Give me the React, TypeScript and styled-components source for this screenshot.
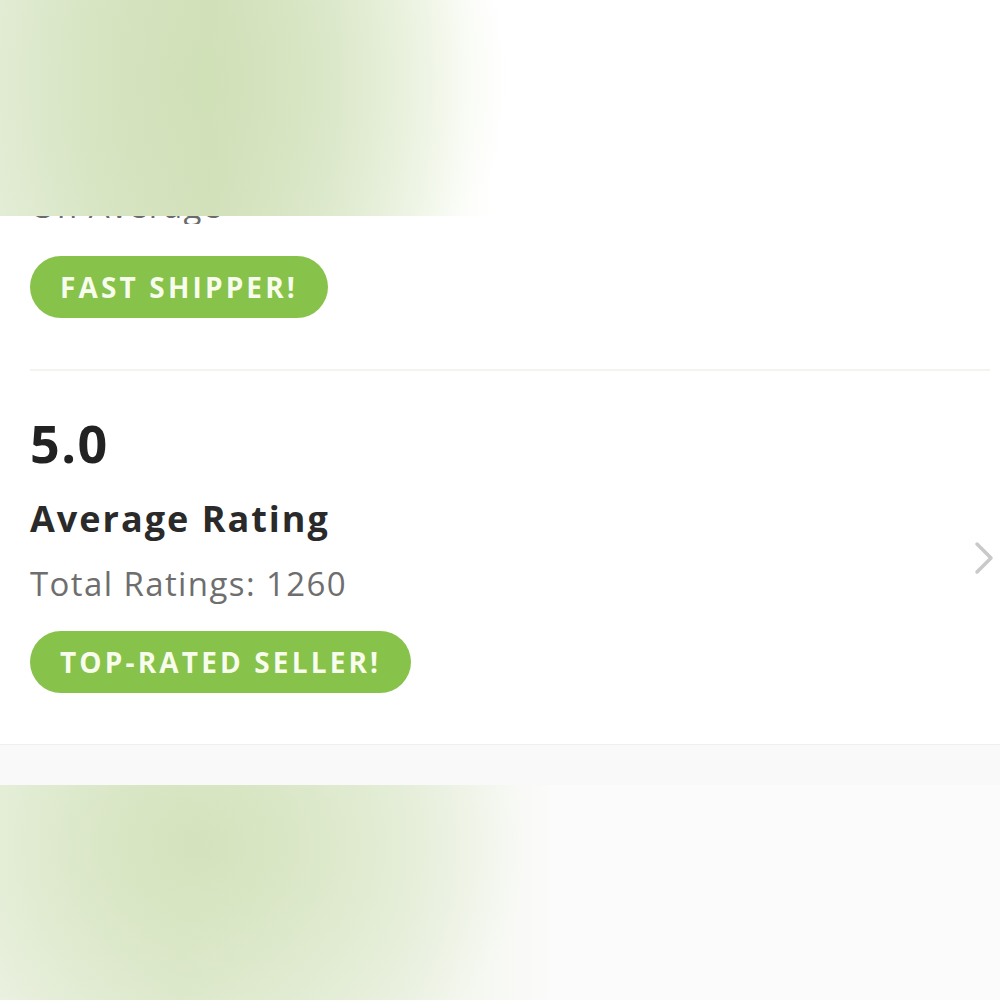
import React from "react";
import styled, { createGlobalStyle } from "styled-components";

const GlobalStyle = createGlobalStyle`
  html, body {
    margin: 0;
    padding: 0;
    background: #ffffff;
  }
  body {
    font-family: "Open Sans", Lato, "Liberation Sans", sans-serif;
    -webkit-font-smoothing: antialiased;
  }
`;

const Page = styled.div`
  width: 1000px;
  height: 1000px;
  overflow: hidden;
  display: flex;
  flex-direction: column;
  background: #ffffff;
`;

const Stats = styled.div`
  display: flex;
  flex-direction: column;
  border-bottom: 1px solid #efefef;
`;

const ClipTop = styled.div`
  position: relative;
  height: 224px;
  overflow: hidden;
`;

const BlurTop = styled.div`
  position: absolute;
  left: 0;
  top: 0;
  width: 1000px;
  height: 216px;
  background:
    radial-gradient(ellipse 300px 260px at 210px 80px, rgba(205, 222, 178, 0.55), rgba(205, 222, 178, 0) 100%),
    linear-gradient(to right, #e5eed9 0px, #d9e6c6 120px, #d4e2bd 210px, #e2ecd4 330px, #f3f8ec 420px, #fdfefb 470px, #ffffff 500px);
`;

const Faded = styled.p`
  position: absolute;
  left: 30px;
  bottom: 0;
  margin: 0;
  font-size: 33px;
  line-height: 36px;
  letter-spacing: 1.4px;
  color: #6b6b6b;
`;

const Body = styled.div`
  display: flex;
  flex-direction: column;
  padding: 0 4px 0 30px;
`;

const Pill = styled.span`
  align-self: flex-start;
  display: inline-flex;
  align-items: center;
  height: 62px;
  padding: 0 30px;
  border-radius: 31px;
  background: #87c24b;
  color: #f7fcec;
  font-size: 28px;
  font-weight: 700;
  letter-spacing: 3.15px;
`;

const Divider = styled.hr`
  margin: 0 6px 0 0;
  border: none;
  border-top: 2px solid #f3f3ef;
`;

const Row = styled.div`
  display: flex;
  align-items: center;
  justify-content: space-between;
`;

const Info = styled.div`
  display: flex;
  flex-direction: column;
`;

const Score = styled.div`
  font-size: 52px;
  line-height: 60px;
  font-weight: 700;
  letter-spacing: 1.5px;
  color: #222222;
`;

const Title = styled.div`
  font-size: 36px;
  line-height: 44px;
  font-weight: 700;
  letter-spacing: 2px;
  color: #2a2a2a;
`;

const Sub = styled.div`
  font-size: 33px;
  line-height: 44px;
  letter-spacing: 1.4px;
  color: #6e6e6e;
`;

const Chevron = styled.svg`
  width: 24px;
  height: 36px;
`;

const Band = styled.div`
  height: 40px;
  background: #f9f9f9;
`;

const BlurBottom = styled.div`
  flex: 1;
  background:
    radial-gradient(ellipse 330px 260px at 200px 60px, rgba(210, 226, 186, 0.9), rgba(210, 226, 186, 0) 100%),
    linear-gradient(to right, #eef3e6 0px, #e3ecd5 180px, #eef3e6 400px, #f9faf7 520px, #fbfbfb 560px);
`;

const App = () => {
  return (
    <Page>
      <GlobalStyle />
      <Stats>
        <ClipTop>
          <Faded>On Average</Faded>
          <BlurTop />
        </ClipTop>
        <Body>
          <div style={{ height: 32 }} />
          <Pill>FAST SHIPPER!</Pill>
          <div style={{ height: 51 }} />
          <Divider />
          <Row>
            <Info>
              <div style={{ height: 42 }} />
              <Score>5.0</Score>
              <div style={{ height: 24 }} />
              <Title>Average Rating</Title>
              <div style={{ height: 21 }} />
              <Sub>Total Ratings: 1260</Sub>
              <div style={{ height: 25 }} />
              <Pill>TOP-RATED SELLER!</Pill>
              <div style={{ height: 51 }} />
            </Info>
            <Chevron viewBox="0 0 24 36">
              <path d="M5 4 L19 18 L5 32" fill="none" stroke="#c9c9c9" strokeWidth="3.5" strokeLinecap="round" strokeLinejoin="round" />
            </Chevron>
          </Row>
        </Body>
      </Stats>
      <Band />
      <BlurBottom />
    </Page>
  );
};

export default App;
